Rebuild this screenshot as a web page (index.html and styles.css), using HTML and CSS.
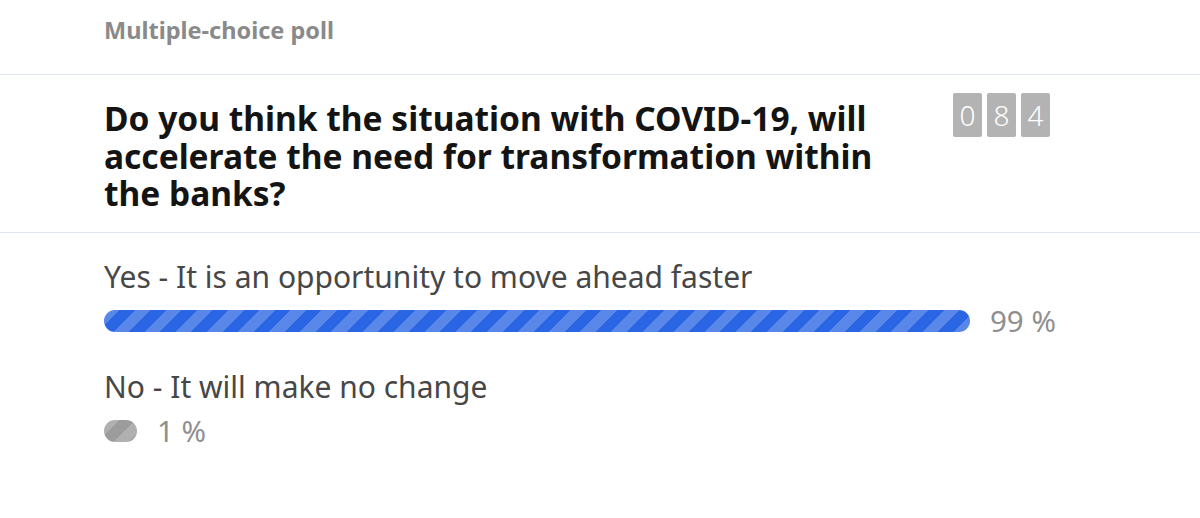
FILE: index.html
```html
<!DOCTYPE html>
<html>
<head>
<meta charset="utf-8">
<link rel="stylesheet" href="styles.css">
</head>
<body>
<div class="poll">
  <header class="poll-head">
    <div class="inner"><h2 class="poll-type">Multiple-choice poll</h2></div>
  </header>
  <section class="poll-question">
    <div class="inner qrow">
      <h1 class="question">Do you think the situation with COVID-19, will accelerate the need for transformation within the banks?</h1>
      <div class="counter"><span class="digit">0</span><span class="digit">8</span><span class="digit">4</span></div>
    </div>
  </section>
  <section class="poll-options inner">
    <div class="option">
      <div class="label">Yes - It is an opportunity to move ahead faster</div>
      <div class="bar-row">
        <div class="bar bar-blue" style="width: 866px"></div>
        <span class="pct">99 %</span>
      </div>
    </div>
    <div class="option">
      <div class="label">No - It will make no change</div>
      <div class="bar-row">
        <div class="bar bar-gray" style="width: 33px"></div>
        <span class="pct">1 %</span>
      </div>
    </div>
  </section>
</div>
</body>
</html>
```

FILE: styles.css
```css
html, body {
  margin: 0;
  padding: 0;
  background: #ffffff;
}
body {
  font-family: "Noto Sans", "Open Sans", "Liberation Sans", sans-serif;
  width: 1200px;
  height: 518px;
  overflow: hidden;
}
.inner {
  padding-left: 104px;
  width: 946px;
}
.poll-head {
  height: 75px;
  border-bottom: 1px solid #dfe5ee;
  box-sizing: border-box;
}
.poll-type {
  margin: 0;
  padding-top: 15px;
  font-size: 23.5px;
  line-height: 30px;
  font-weight: 700;
  color: #8a8a8a;
}
.poll-question {
  border-bottom: 1px solid #dfe5ee;
  height: 158px;
  box-sizing: border-box;
}
.qrow {
  display: flex;
  justify-content: space-between;
  align-items: flex-start;
}
.question {
  margin: 0;
  padding-top: 25px;
  width: 800px;
  font-size: 33.5px;
  line-height: 37.5px;
  font-weight: 700;
  color: #141414;
}
.counter {
  display: flex;
  gap: 5px;
  padding-top: 18px;
}
.digit {
  width: 29px;
  height: 44px;
  background: #b3b3b3;
  border-radius: 2px;
  color: #ffffff;
  font-size: 28px;
  font-weight: 300;
  line-height: 44px;
  text-align: center;
}
.poll-options {
  padding-top: 24px;
}
.option {
  display: flex;
  flex-direction: column;
}
.label {
  font-size: 30px;
  line-height: 40px;
  color: #474747;
}
.bar-row {
  display: flex;
  align-items: center;
  gap: 20px;
  height: 48px;
  margin-bottom: 22px;
}
.bar {
  height: 22px;
  border-radius: 11px;
  flex-shrink: 0;
}
.bar-blue {
  background-color: #2a66e3;
  background-image: repeating-linear-gradient(135deg, rgba(255,255,255,0.22) 0 11px, transparent 11px 22px);
}
.bar-gray {
  background-color: #9c9c9c;
  background-image: repeating-linear-gradient(135deg, rgba(255,255,255,0.2) 0 11px, transparent 11px 22px);
}
.pct {
  flex-shrink: 0;
  white-space: nowrap;
  font-size: 29.5px;
  font-weight: 400;
  color: #8f8f8f;
  line-height: 40px;
}
```
